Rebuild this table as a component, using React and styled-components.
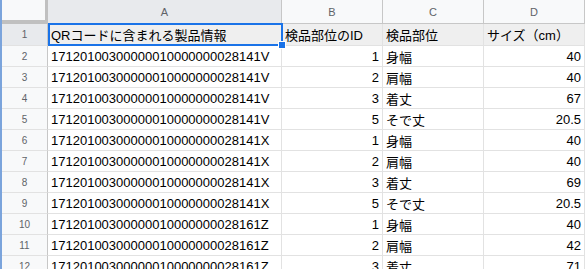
import React from 'react'
import styled, { createGlobalStyle } from 'styled-components'

const GlobalStyle = createGlobalStyle`
  html, body {
    margin: 0;
    padding: 0;
    background: #ffffff;
    overflow: hidden;
  }
  body {
    font-family: "Liberation Sans", Arial, "Noto Sans CJK JP", sans-serif;
  }
`

const rows = [
  ['QRコードに含まれる製品情報', '検品部位のID', '検品部位', 'サイズ（cm）'],
  ['17120100300000010000000028141V', 1, '身幅', 40],
  ['17120100300000010000000028141V', 2, '肩幅', 40],
  ['17120100300000010000000028141V', 3, '着丈', 67],
  ['17120100300000010000000028141V', 5, 'そで丈', 20.5],
  ['17120100300000010000000028141X', 1, '身幅', 40],
  ['17120100300000010000000028141X', 2, '肩幅', 40],
  ['17120100300000010000000028141X', 3, '着丈', 69],
  ['17120100300000010000000028141X', 5, 'そで丈', 20.5],
  ['17120100300000010000000028161Z', 1, '身幅', 40],
  ['17120100300000010000000028161Z', 2, '肩幅', 42],
  ['17120100300000010000000028161Z', 3, '着丈', 71],
]

const columns = ['A', 'B', 'C', 'D']

const Sheet = styled.div`
  position: relative;
  display: grid;
  grid-template-columns: 46px 234px 101px 101px 1fr;
  grid-template-rows: 24px 22px;
  grid-auto-rows: 21px;
  border-left: 2px solid #7ba4dc;
  width: 585px;
  height: 269px;
  box-sizing: border-box;
  overflow: hidden;
`

const Corner = styled.div`
  background: #f8f9fa;
  border-right: 4px solid #c0c0c0;
  border-bottom: 4px solid #c0c0c0;
  margin-right: -1px;
`

const ColHead = styled.div`
  display: flex;
  align-items: center;
  justify-content: center;
  background: ${p => (p.$active ? '#e8eaed' : '#f8f9fa')};
  border-right: 1px solid #c7c7c7;
  border-bottom: 1px solid #c7c7c7;
  color: #5f6368;
  font-size: 11px;
`

const RowHead = styled.div`
  display: flex;
  align-items: center;
  justify-content: center;
  background: ${p => (p.$active ? '#e8eaed' : '#f8f9fa')};
  border-right: 1px solid #c7c7c7;
  border-bottom: 1px solid #e2e2e2;
  color: #5f6368;
  font-size: 10px;
`

const Cell = styled.div`
  display: flex;
  align-items: center;
  justify-content: ${p => (p.$num ? 'flex-end' : 'flex-start')};
  padding: 0 3px;
  background: ${p => (p.$head ? '#efefef' : '#ffffff')};
  border-right: 1px solid #e2e2e2;
  border-bottom: 1px solid #e2e2e2;
  color: #000000;
  font-size: 13px;
  white-space: nowrap;
  overflow: hidden;

  &:last-child {
    border-right: none;
  }
`

// blue frame around the active cell A1
const Selection = styled.div`
  position: absolute;
  left: 46px;
  top: 23px;
  width: 235px;
  height: 23px;
  border: 2px solid #1a73e8;
  box-sizing: border-box;
  pointer-events: none;

  &::after {
    content: '';
    position: absolute;
    right: -5px;
    bottom: -5px;
    width: 6px;
    height: 6px;
    background: #1a73e8;
    border: 1px solid #ffffff;
  }
`

export default function App() {
  return (
    <>
      <GlobalStyle />
      <Sheet>
        <Corner />
        {columns.map(c => (
          <ColHead key={c} $active={c === 'A'}>{c}</ColHead>
        ))}
        {rows.map((r, i) => (
          <React.Fragment key={i}>
            <RowHead $active={i === 0}>{i + 1}</RowHead>
            {r.map((v, j) => (
              <Cell key={j} $head={i === 0} $num={typeof v === 'number'}>
                {v}
              </Cell>
            ))}
          </React.Fragment>
        ))}
        <Selection />
      </Sheet>
    </>
  )
}
